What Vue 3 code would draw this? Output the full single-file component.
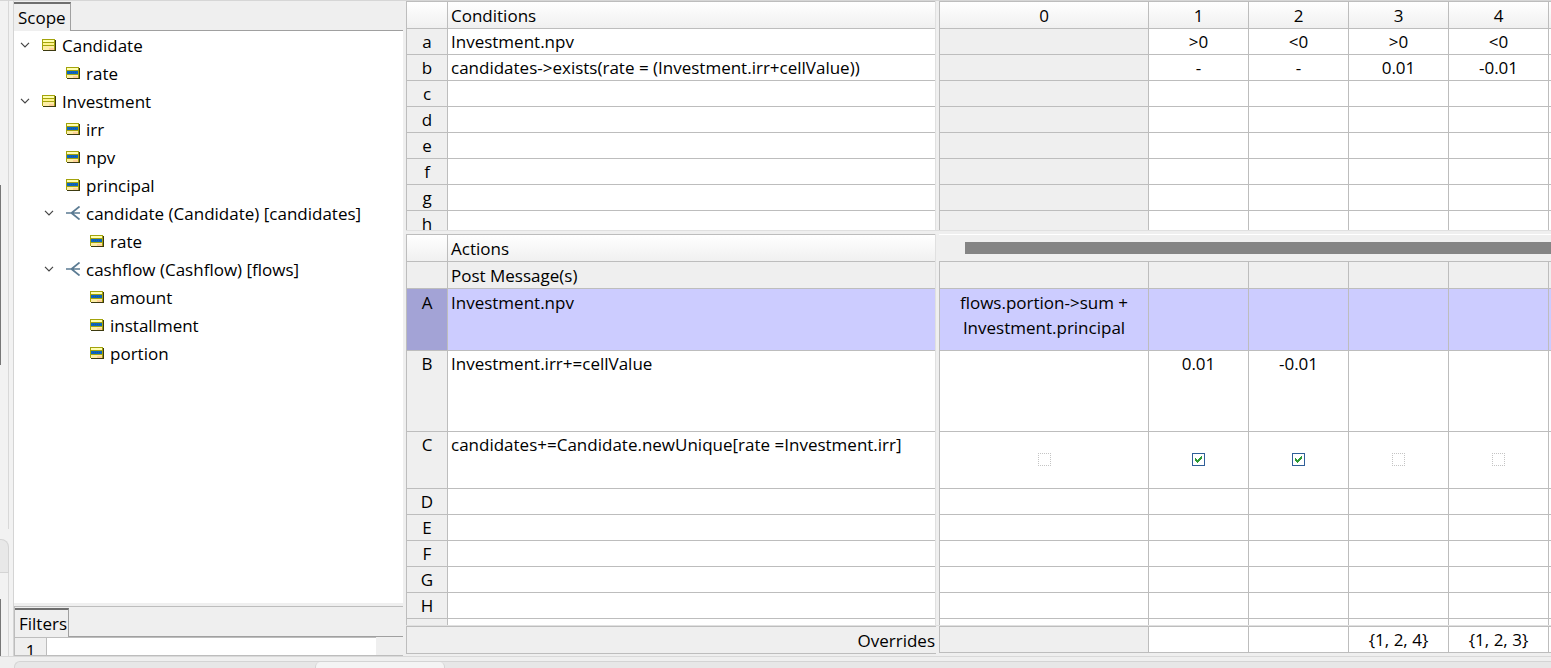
<script setup>
import { ref, computed } from 'vue'

const tree = ref([
  { id: 1, level: 0, kind: 'entity', label: 'Candidate', open: true },
  { id: 2, level: 1, kind: 'attribute', label: 'rate' },
  { id: 3, level: 0, kind: 'entity', label: 'Investment', open: true },
  { id: 4, level: 1, kind: 'attribute', label: 'irr' },
  { id: 5, level: 1, kind: 'attribute', label: 'npv' },
  { id: 6, level: 1, kind: 'attribute', label: 'principal' },
  { id: 7, level: 1, kind: 'association', label: 'candidate (Candidate) [candidates]', open: true },
  { id: 8, level: 2, kind: 'attribute', label: 'rate' },
  { id: 9, level: 1, kind: 'association', label: 'cashflow (Cashflow) [flows]', open: true },
  { id: 10, level: 2, kind: 'attribute', label: 'amount' },
  { id: 11, level: 2, kind: 'attribute', label: 'installment' },
  { id: 12, level: 2, kind: 'attribute', label: 'portion' }
])

const visibleNodes = computed(() => {
  const out = []
  let closedAt = Infinity
  for (const node of tree.value) {
    if (node.level > closedAt) continue
    closedAt = node.open === false ? node.level : Infinity
    out.push(node)
  }
  return out
})

const columns = ['0', '1', '2', '3', '4', '']

const conditions = [
  { key: 'a', text: 'Investment.npv', cells: ['', '>0', '<0', '>0', '<0', ''] },
  { key: 'b', text: 'candidates->exists(rate = (Investment.irr+cellValue))', cells: ['', '-', '-', '0.01', '-0.01', ''] },
  ...['c', 'd', 'e', 'f', 'g', 'h'].map((key) => ({ key, text: '', cells: ['', '', '', '', '', ''] }))
]

const actions = ref([
  { key: 'A', size: 'row-a', text: 'Investment.npv', cells: ['flows.portion->sum + Investment.principal', '', '', '', '', ''] },
  { key: 'B', size: 'row-b', text: 'Investment.irr+=cellValue', cells: ['', '0.01', '-0.01', '', '', ''] },
  { key: 'C', size: 'row-c', text: 'candidates+=Candidate.newUnique[rate =Investment.irr]', checks: [false, true, true, false, false] },
  ...['D', 'E', 'F', 'G', 'H', ''].map((key) => ({ key, size: 'row', text: '', cells: ['', '', '', '', '', ''] }))
])

const overrides = ['', '', '', '{1, 2, 4}', '{1, 2, 3}', '']
</script>

<template>
  <div class="window">
    <div class="top-line"></div>
    <div class="body">
      <div class="gutter">
        <div class="gutter-upper"><i class="thumb"></i></div>
        <div class="gutter-tab"></div>
        <div class="gutter-lower"></div>
      </div>

      <aside class="sidebar">
        <div class="tabs"><button class="tab" type="button">Scope</button></div>
        <ul class="tree">
          <li v-for="node in visibleNodes" :key="node.id" class="node" :class="'level-' + node.level">
            <button v-if="node.open !== undefined" class="twisty" type="button" :aria-label="'Toggle ' + node.label" @click="node.open = !node.open">
              <svg width="10" height="6" viewBox="0 0 10 6"><path d="M1 .8 5 4.8 9 .8" fill="none" stroke="#444" stroke-width="1.2" /></svg>
            </button>
            <span v-else class="twisty"></span>
            <svg v-if="node.kind === 'association'" class="icon" width="14" height="14" viewBox="0 0 14 14">
              <path d="M0 7H14M5.500 7 13.500 .5M5.500 7 13.500 13.500" fill="none" stroke="#5b7b93" stroke-width="1.700" />
            </svg>
            <svg v-else class="icon" width="14" height="12" viewBox="0 0 14 12" shape-rendering="crispEdges">
              <path d="M1 1H14V12H1z" fill="#3c3a10" />
              <path d="M0 0H13V11H0z" fill="#a3a30c" />
              <path d="M1 1H12V3H1z" fill="#ffffb0" />
              <template v-if="node.kind === 'attribute'">
                <path d="M1 4H12V7H1z" fill="#0a66c2" />
                <path d="M3 5H4V6H3zM5 5H6V6H5zM7 5H8V6H7zM9 5H10V6H9z" fill="#1f5596" />
              </template>
              <path v-else d="M1 4H12V6H1z" fill="#fff38c" />
              <path :d="node.kind === 'attribute' ? 'M1 8H12V11H1z' : 'M1 7H12V11H1z'" fill="#fdeea6" />
              <path d="M7 9H12V11H7z" fill="#ffd09a" />
            </svg>
            <span>{{ node.label }}</span>
          </li>
        </ul>
        <div class="filters">
          <div class="tabs"><button class="tab filters-tab" type="button">Filters</button></div>
          <div class="filter-row">
            <span class="filter-num">1</span>
            <span class="filter-cell"></span>
          </div>
        </div>
      </aside>

      <main class="sheet">
        <section class="pane conditions">
          <div class="side-left">
            <table class="grid">
              <thead>
                <tr class="head"><th class="key"></th><th class="text">Conditions</th></tr>
              </thead>
              <tbody>
                <tr v-for="row in conditions" :key="row.key" class="row">
                  <th class="key">{{ row.key }}</th>
                  <td class="text">{{ row.text }}</td>
                </tr>
              </tbody>
            </table>
          </div>
          <div class="side-right">
            <table class="grid framed">
              <thead>
                <tr class="head"><th v-for="(c, i) in columns" :key="i" :class="'col-' + i">{{ c }}</th></tr>
              </thead>
              <tbody>
                <tr v-for="row in conditions" :key="row.key" class="row">
                  <td v-for="(c, i) in row.cells" :key="i" :class="['col-' + i, { shaded: i === 0 }]">{{ c }}</td>
                </tr>
              </tbody>
            </table>
          </div>
        </section>

        <section class="pane actions">
          <div class="side-left">
            <table class="grid">
              <thead>
                <tr class="head"><th class="key"></th><th class="text">Actions</th></tr>
              </thead>
              <tbody>
                <tr class="post"><th class="key"></th><td class="text">Post Message(s)</td></tr>
                <tr v-for="(row, r) in actions" :key="r" :class="row.size">
                  <th class="key">{{ row.key }}</th>
                  <td class="text">{{ row.text }}</td>
                </tr>
              </tbody>
            </table>
          </div>
          <div class="side-right">
            <div class="scrollbar"><div class="scroll-thumb"></div></div>
            <table class="grid framed">
              <tbody>
                <tr class="post"><td v-for="(c, i) in columns" :key="i" :class="'col-' + i"></td></tr>
                <tr v-for="(row, r) in actions" :key="r" :class="row.size">
                  <template v-if="row.checks">
                    <td v-for="(c, i) in row.checks" :key="i" class="check-cell" :class="'col-' + i">
                      <label class="check">
                        <input v-model="row.checks[i]" type="checkbox" :aria-label="'Rule ' + i + ' action ' + row.key" />
                        <svg v-if="row.checks[i]" width="13" height="13" viewBox="0 0 13 13" shape-rendering="crispEdges">
                          <path d="M3 5H4V6H5V7H6V6H7V5H8V4H9V3H10V6H9V7H8V8H7V9H6V10H5V9H4V8H3z" fill="#2f9a35" />
                        </svg>
                      </label>
                    </td>
                    <td class="col-5"></td>
                  </template>
                  <template v-else>
                    <td v-for="(c, i) in row.cells" :key="i" :class="'col-' + i">{{ c }}</td>
                  </template>
                </tr>
              </tbody>
            </table>
          </div>
        </section>

        <section class="pane overrides">
          <div class="side-left overrides-label">Overrides</div>
          <div class="side-right">
            <table class="grid framed">
              <tbody>
                <tr class="row">
                  <td v-for="(c, i) in overrides" :key="i" :class="['col-' + i, { shaded: i === 0 }]">{{ c }}</td>
                </tr>
              </tbody>
            </table>
          </div>
        </section>
      </main>
    </div>
    <footer class="footer"><div class="strip"><div class="strip-tab"></div></div></footer>
  </div>
</template>

<style>
body { margin: 0; background: #f0f0f0; }
</style>

<style scoped>
* { box-sizing: border-box; }
.window {
  display: flex;
  flex-direction: column;
  height: 100vh;
  overflow: hidden;
  background: #efefef;
  color: #000;
  font: 17px/25px "Open Sans", "Noto Sans", sans-serif;
}
button { padding: 0; border: 0; background: none; color: inherit; font: inherit; }
.top-line { flex: none; height: 1px; background: #d6d6d6; }
.body { display: flex; flex: 1; min-height: 0; }

.gutter { display: flex; flex-direction: column; flex: none; width: 14px; padding-right: 4px; border-right: 1px solid #d4d4d4; background: #f2f2f2; }
.gutter-upper { flex: 1; display: flex; align-items: center; border-right: 1px solid #d8d8d8; margin-bottom: 10px; padding-top: 20px; }
.thumb { width: 1px; height: 180px; background: #777; }
.gutter-tab { height: 34px; border: solid #d4d4d4; border-width: 1px 1px 1px 0; border-radius: 0 8px 0 0; background: #e8e8e8; }
.gutter-lower { height: 83px; border-right: 1px solid #d8d8d8; background: linear-gradient(#777, #777) 0 26px / 1px 100% no-repeat; }

.sidebar { display: flex; flex-direction: column; flex: none; width: 389px; }
.tabs { display: flex; flex: none; height: 30px; padding-top: 1px; }
.tabs::after { content: ""; flex: 1; border-bottom: 1px solid #a0a0a0; }
.tab { padding: 0 4px; border-top: 2px solid #6e6e6e; border-right: 1px solid #a0a0a0; }
.tree { flex: 1; min-height: 0; margin: 0; padding: 0; overflow: hidden; list-style: none; background: #fff; }
.node { display: flex; align-items: center; height: 28px; white-space: nowrap; }
.level-0 { padding-left: 6px; }
.level-1 { padding-left: 30px; }
.level-2 { padding-left: 54px; }
.twisty { display: flex; flex: none; width: 22px; }
.icon { flex: none; margin-right: 6px; }
.filters { flex: none; margin-top: 3px; border-top: 1px solid #bdbdbd; border-bottom: 1px solid #bdbdbd; border-left: 1px solid #bdbdbd; }
.filters-tab { padding: 0 1px 0 4px; }
.filter-row { display: flex; height: 18px; overflow: hidden; padding-right: 27px; }
.filter-num { flex: none; width: 32px; border: solid #bdbdbd; border-width: 1px 1px 0 0; text-align: center; }
.filter-cell { flex: 1; border-top: 1px solid #bdbdbd; background: #fff; }

.sheet { display: flex; flex-direction: column; flex: 1; min-width: 0; padding: 0 0 2px 3px; }
.pane { display: flex; gap: 3px; min-width: 0; }
.side-left { flex: 1; min-width: 0; overflow: hidden; border-left: 1px solid #bdbdbd; border-right: 1px solid #e0e0e0; }
.side-right { flex: none; width: 612px; overflow: hidden; }
.conditions { flex: none; height: 230px; margin-bottom: 3px; border-bottom: 1px solid #e0e0e0; }
.actions { flex: 1; min-height: 0; border-bottom: 1px solid #e0e0e0; }
.overrides { flex: none; }
.overrides-label { height: 28px; padding: 1px 1px 0 0; border: solid #bdbdbd; border-width: 1px 0 1px 1px; text-align: right; }

.grid { width: 100%; table-layout: fixed; border-collapse: separate; border-spacing: 0; border-top: 1px solid #bdbdbd; background: #fff; }
.framed { width: 613px; border-left: 1px solid #bdbdbd; }
.grid th, .grid td { height: 26px; padding: 1px 0 0; border-right: 1px solid #bdbdbd; border-bottom: 1px solid #bdbdbd; font-weight: 400; line-height: 24px; text-align: center; vertical-align: top; }
.grid .head th { height: 27px; background: linear-gradient(#fff, #f0f0f0); line-height: 25px; }
.grid .key { width: 41px; background: #efefef; }
.grid .text { padding-left: 3px; border-right: 0; text-align: left; white-space: nowrap; }
.col-0 { width: 209px; }
.col-1, .col-2, .col-3, .col-4 { width: 100px; }
.grid .shaded { background: #efefef; }
.grid .post th, .grid .post td { height: 27px; background: #efefef; line-height: 25px; }
.grid .row-a td, .grid .row-a th { height: 62px; background: #ccf; line-height: 25px; }
.grid .row-a th { background: #a3a3d6; }
.grid .row-b td { height: 81px; }
.grid .row-c td { height: 57px; }
.grid .check-cell { padding: 0 0 1px; vertical-align: middle; }
.check { display: grid; justify-content: center; }
.check input, .check svg { grid-area: 1 / 1; }
.check input { width: 13px; height: 13px; margin: 0; appearance: none; border: 1px dotted #c4c4c4; background: #fff; }
.check input:checked { border: 1px solid #2f5f98; }
.check svg { pointer-events: none; }
.scrollbar { height: 27px; padding: 7px 0 8px 26px; border-top: 1px solid #fff; }
.scroll-thumb { height: 12px; background: #848484; }

.footer { flex: none; height: 12px; padding: 4px 0 0 14px; border-top: 1px solid #d9d9d9; }
.strip { height: 7px; padding-left: 300px; border-top: 1px solid #d4d4d4; border-left: 1px solid #d4d4d4; border-radius: 6px 0 0 0; background: #e7e7e7; }
.strip-tab { width: 130px; height: 6px; border: solid #d4d4d4; border-width: 0 1px; border-radius: 5px 5px 0 0; background: #f4f4f4; }
</style>
